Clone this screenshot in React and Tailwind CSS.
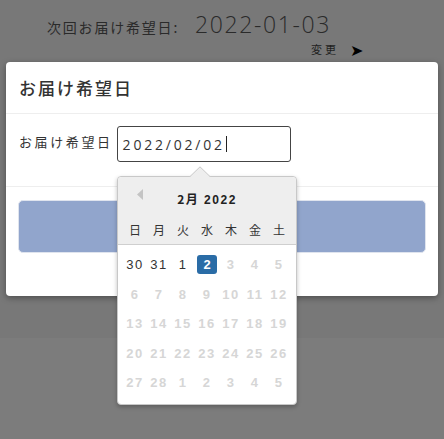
import React from 'react';

const jp = { fontFamily: '"Noto Sans CJK JP", "Noto Sans", sans-serif' };
const num = { fontFamily: '"Liberation Sans", Arial, sans-serif' };

const weeks = [
  [['30', 'on'], ['31', 'on'], ['1', 'on'], ['2', 'sel'], ['3'], ['4'], ['5']],
  [['6'], ['7'], ['8'], ['9'], ['10'], ['11'], ['12']],
  [['13'], ['14'], ['15'], ['16'], ['17'], ['18'], ['19']],
  [['20'], ['21'], ['22'], ['23'], ['24'], ['25'], ['26']],
  [['27'], ['28'], ['1'], ['2'], ['3'], ['4'], ['5']],
];

function DatePicker() {
  return (
    <div className="absolute left-[111px] top-[114px] w-[180px] rounded-[4px] border border-[#c8c8c8] bg-white shadow-[0_2px_4px_rgba(0,0,0,0.25)]">
      {/* caret */}
      <svg className="absolute left-[71px] top-[-11px]" width="24" height="12" viewBox="0 0 24 12">
        <path d="M0 11.5 L11 0.8 L22 11.5" fill="#eeeeee" stroke="#c8c8c8" strokeWidth="1" />
        <rect x="1" y="11" width="20" height="2" fill="#eeeeee" />
      </svg>
      <div className="rounded-t-[4px] bg-[#eeeeee] border-b border-[#cfcfcf] h-[68px] relative">
        <svg className="absolute left-[19px] top-[12px]" width="6" height="11" viewBox="0 0 6 11">
          <path d="M6 0 L0 5.5 L6 11 Z" fill="#c4c4c4" />
        </svg>
        <div className="pt-[13px] text-center text-[12px] font-bold tracking-[1.5px] text-[#222]" style={num}>
          <span style={jp}>2月</span> 2022
        </div>
        <div className="grid grid-cols-7 px-[5px] pt-[12px] text-[12px] text-[#333]" style={jp}>
          {['日', '月', '火', '水', '木', '金', '土'].map((d) => (
            <div key={d} className="text-center">{d}</div>
          ))}
        </div>
      </div>
      <div className="px-[5px] pt-[5px] pb-[6px]">
        {weeks.map((w, i) => (
          <div key={i} className="grid grid-cols-7 h-[29.5px] items-center">
            {w.map(([d, s], j) => (
              <div key={j} className="flex justify-center">
                <span
                  className={
                    s === 'sel'
                      ? 'flex w-[20px] h-[19px] items-center justify-center rounded-[3px] bg-[#2a6ca6] text-white text-[13px] font-bold'
                      : s === 'on'
                      ? 'text-[13px] tracking-[1.5px] text-[#333]'
                      : 'text-[13px] font-bold tracking-[1.5px] text-[#d6d6d6]'
                  }
                  style={num}
                >
                  {d}
                </span>
              </div>
            ))}
          </div>
        ))}
      </div>
    </div>
  );
}

export default function App() {
  return (
    <div className="relative h-[439px] w-[444px] overflow-hidden bg-[#787878]" style={jp}>
      <div className="h-[62px]">
        <div className="flex items-baseline pl-[47px] pt-[7px] text-[#2a2a2a]">
          <span className="text-[14px] tracking-[1.8px]">次回お届け希望日:</span>
          <span className="ml-[16px] text-[23px] font-light tracking-[1.6px]" style={{ fontFamily: '"Open Sans", sans-serif' }}>2022-01-03</span>
        </div>
        <div className="mt-[-1px] flex items-center pl-[311px] text-[11px] text-[#1f1f1f]">
          <span className="tracking-[3px]">変更</span>
          <span className="ml-[11px] text-[16px] leading-none text-black">➤</span>
        </div>
      </div>
      <div className="absolute left-0 right-0 top-[338px] bottom-0 bg-[#7c7c7c]" />

      {/* modal */}
      <div className="relative mx-[6px] h-[234px] rounded-[4px] bg-white shadow-[0_2px_6px_rgba(0,0,0,0.35)]">
        <div className="flex h-[52px] items-center border-b border-[#eeeeee] pl-[13px] pt-[1px]">
          <span className="text-[17px] font-medium tracking-[2px] text-[#333]">お届け希望日</span>
        </div>
        <div className="flex h-[73px] border-b border-[#eeeeee] pl-[13px] pt-[12px]">
          <span className="mt-[6px] text-[13px] tracking-[2.6px] text-[#333]">お届け希望日</span>
          <div className="ml-[4px] flex h-[36px] w-[174px] items-center rounded-[3px] border border-[#444] pl-[5px]">
            <span className="text-[14px] tracking-[2.8px] text-[#333]" style={{ fontFamily: '"Open Sans", sans-serif' }}>2022/02/02</span>
            <span className="ml-[1px] h-[16px] w-px bg-[#222]" />
          </div>
        </div>
        <div className="px-[12px] pt-[13px]">
          <div className="h-[53px] rounded-[5px] border border-[#dfe4ee] bg-[#91a5cc]" />
        </div>
        <DatePicker />
      </div>
    </div>
  );
}
